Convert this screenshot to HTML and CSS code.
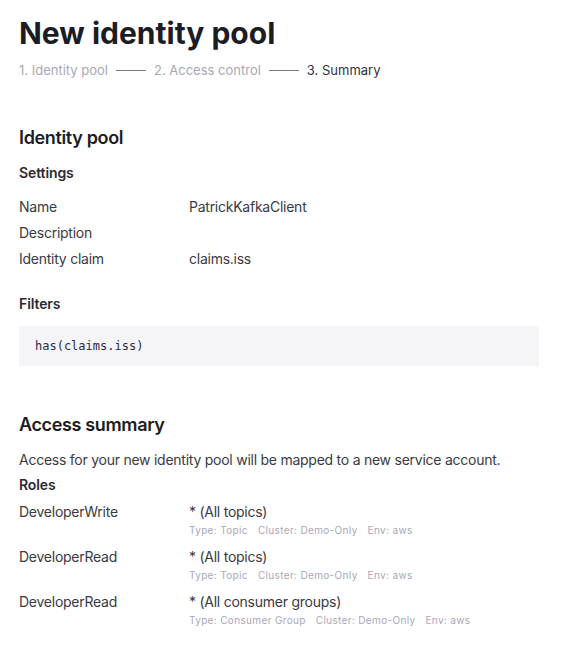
FILE: index.html
```html
<!DOCTYPE html>
<html>
<head>
<meta charset="utf-8">
<link rel="stylesheet" href="styles.css">
</head>
<body>
<main class="page">
  <h1 class="title">New identity pool</h1>
  <nav class="steps">
    <span class="step">1. Identity pool</span>
    <span class="sep"></span>
    <span class="step">2. Access control</span>
    <span class="sep"></span>
    <span class="step current">3. Summary</span>
  </nav>

  <section class="section first">
    <h2 class="section-title">Identity pool</h2>
    <h3 class="sub">Settings</h3>
    <div class="kv">
      <div class="row"><span class="k">Name</span><span class="v">PatrickKafkaClient</span></div>
      <div class="row"><span class="k">Description</span><span class="v"></span></div>
      <div class="row"><span class="k">Identity claim</span><span class="v">claims.iss</span></div>
    </div>
    <h3 class="sub filters">Filters</h3>
    <div class="code">has(claims.iss)</div>
  </section>

  <section class="section second">
    <h2 class="section-title">Access summary</h2>
    <p class="desc">Access for your new identity pool will be mapped to a new service account.</p>
    <h3 class="sub roles-title">Roles</h3>
    <div class="roles">
      <div class="role">
        <span class="k">DeveloperWrite</span>
        <div class="rv">
          <div class="res">* (All topics)</div>
          <div class="meta"><span>Type: Topic</span><span>Cluster: Demo-Only</span><span>Env: aws</span></div>
        </div>
      </div>
      <div class="role">
        <span class="k">DeveloperRead</span>
        <div class="rv">
          <div class="res">* (All topics)</div>
          <div class="meta"><span>Type: Topic</span><span>Cluster: Demo-Only</span><span>Env: aws</span></div>
        </div>
      </div>
      <div class="role">
        <span class="k">DeveloperRead</span>
        <div class="rv">
          <div class="res">* (All consumer groups)</div>
          <div class="meta"><span>Type: Consumer Group</span><span>Cluster: Demo-Only</span><span>Env: aws</span></div>
        </div>
      </div>
    </div>
  </section>
</main>
</body>
</html>
```

FILE: styles.css
```css
* { box-sizing: border-box; }
html, body { margin: 0; padding: 0; background: #ffffff; }
body {
  font-family: Inter, "Noto Sans", sans-serif;
  color: #3a3a44;
  font-size: 14px;
  letter-spacing: -0.25px;
}
.page {
  width: 520px;
  margin-left: 19px;
  padding-top: 14px;
}
.title {
  margin: 0;
  font-size: 30px;
  line-height: 38px;
  font-weight: 700;
  color: #1c1c24;
  letter-spacing: 0;
}
.steps {
  display: flex;
  align-items: center;
  gap: 8px;
  margin-top: 8px;
  font-size: 13px;
  line-height: 20px;
  letter-spacing: 0;
  color: #a9a7b8;
}
.step.current { color: #33333d; }
.sep {
  width: 30px;
  height: 1px;
  background: #7a7a86;
}
.section-title {
  margin: 0;
  font-size: 18px;
  line-height: 24px;
  font-weight: 600;
  color: #1c1c24;
  letter-spacing: -0.35px;
}
.first { margin-top: 46px; }
.sub {
  margin: 0;
  font-size: 14px;
  line-height: 20px;
  font-weight: 600;
  color: #2a2a33;
  letter-spacing: -0.1px;
}
.first .sub { margin-top: 13px; }
.kv { margin-top: 14px; display: flex; flex-direction: column; gap: 6px; }
.row { display: flex; line-height: 20px; }
.k { width: 170px; flex: none; }
.v { flex: 1; }
.first .sub.filters { margin-top: 25px; }
.code {
  margin-top: 12px;
  height: 40px;
  padding: 0 16px;
  display: flex;
  align-items: center;
  background: #f5f5f8;
  font-family: "DejaVu Sans Mono", monospace;
  font-size: 12px;
  letter-spacing: 0;
  color: #2a2a45;
}
.second { margin-top: 47px; }
.desc { margin: 13px 0 0; line-height: 20px; }
.sub.roles-title { margin-top: 5px; }
.roles { margin-top: 7px; display: flex; flex-direction: column; gap: 11px; }
.role { display: flex; line-height: 20px; }
.rv { display: flex; flex-direction: column; }
.meta {
  display: flex;
  gap: 10px;
  font-size: 10px;
  line-height: 12px;
  letter-spacing: 0.35px;
  color: #a9a7b8;
  margin-top: 2px;
}
```
